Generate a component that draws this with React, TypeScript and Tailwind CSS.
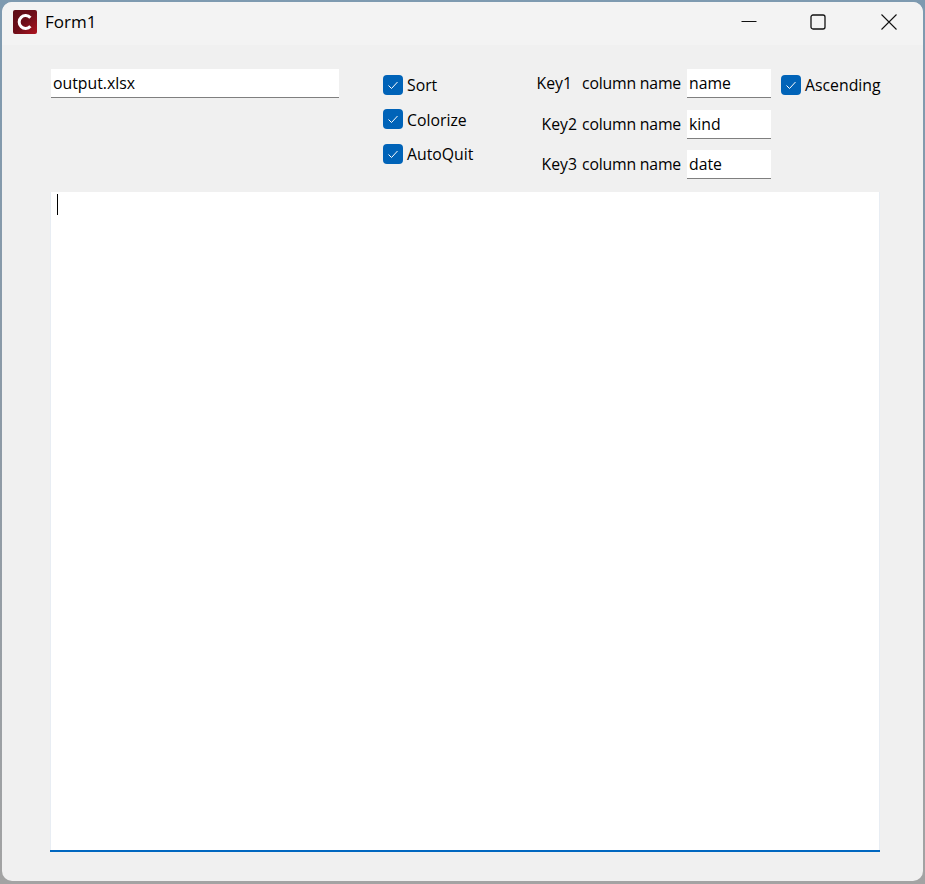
const FONT = "font-['Open_Sans',sans-serif]";

function Check({ label, className, labelClass }: { label: string; className?: string; labelClass?: string }) {
  return (
    <label className={`flex items-center h-5 ${className ?? ''}`}>
      <span className="flex items-center justify-center size-5 rounded-[4px] bg-[#0063b8] shrink-0">
        <svg width="12" height="12" viewBox="0 0 12 12" fill="none" stroke="#ffffff" strokeWidth="1">
          <path d="M1.5 6.5 L4.5 9.5 L10.5 3" />
        </svg>
      </span>
      <span className={`ml-1 text-[15.8px] leading-5 text-black whitespace-pre ${labelClass ?? ''}`}>{label}</span>
    </label>
  );
}

function Field({ value, className }: { value: string; className: string }) {
  return (
    <input
      readOnly
      value={value}
      className={`h-[29px] bg-white border-b border-[#7f7f7f] pl-[2px] text-[15.8px] text-black outline-none ${className}`}
    />
  );
}

function KeyRow({ name, gap, value, className }: { name: string; gap: string; value: string; className?: string }) {
  return (
    <div className={`flex items-center justify-end ${className ?? ''}`}>
      <span className="text-[15.8px] leading-5 mb-[2px]">{name}</span>
      <span className={`text-[15.8px] leading-5 mb-[2px] tracking-[-0.2px] ${gap}`}>column name</span>
      <Field value={value} className="w-[84px] ml-[6px]" />
    </div>
  );
}

export default function App() {
  return (
    <div className={`w-[925px] h-[884px] overflow-hidden bg-gradient-to-b from-[#7e9ab0] via-[#8d9aa6] to-[#a3a3a3] pl-[2px] pt-[2px] ${FONT}`}>
      <div className="w-[921px] h-[879px] rounded-[10px] overflow-hidden bg-[#f0f0f0] text-black">
        {/* title bar */}
        <div className="flex items-center h-[43px] pb-[3px] bg-[#f3f3f3]">
          <div className="flex items-center justify-center size-6 ml-[11px] rounded-[2px] bg-gradient-to-br from-[#5c0d16] via-[#6d0d18] to-[#b01420]">
            <svg width="18" height="18" viewBox="0 0 18 18" fill="none" stroke="#ffffff" strokeWidth="3">
              <path d="M14.4 4.8 A6.4 6.4 0 1 0 14.4 13.2" />
            </svg>
          </div>
          <span className="ml-2 text-[17px] leading-5">Form1</span>
          <div className="flex items-center ml-auto">
            <svg width="16" height="16" viewBox="0 0 16 16" className="mr-[53px]" stroke="#111" fill="none">
              <path d="M0.5 7.5 H15.5" />
            </svg>
            <svg width="16" height="16" viewBox="0 0 16 16" className="mr-[55px]" stroke="#111" strokeWidth="1.3" fill="none">
              <rect x="1" y="1" width="14" height="14" rx="2" />
            </svg>
            <svg width="16" height="16" viewBox="0 0 16 16" className="mr-[26px]" stroke="#111" strokeWidth="1.1" fill="none">
              <path d="M0.5 0.5 L15.5 15.5 M15.5 0.5 L0.5 15.5" />
            </svg>
          </div>
        </div>

        {/* body */}
        <div className="pl-[48px] pt-[24px]">
          <div className="flex h-[123px] pl-px">
            <Field value="output.xlsx" className="w-[288px]" />
            <div className="flex flex-col ml-[44px] pt-[6px] w-[130px]">
              <Check label="Sort" />
              <Check label="Colorize" className="mt-[14px]" labelClass="mt-[2px]" />
              <Check label="AutoQuit" className="mt-[15px]" />
            </div>
            <div className="flex flex-col w-[258px]">
              <KeyRow name="Key1" gap="ml-[10px]" value="name" />
              <KeyRow name="Key2" gap="ml-[5px]" value="kind" className="mt-3" />
              <KeyRow name="Key3" gap="ml-[5px]" value="date" className="mt-[11px]" />
            </div>
            <Check label="Ascending" className="ml-[10px] mt-[6px]" />
          </div>

          <div className="flex flex-col w-[830px] h-[660px] border-b-2 border-[#0067c0]">
            <div className="flex-1 bg-white border-x border-[#e8edf3] pl-[6px] pt-[2px]">
              <div className="w-px h-[21px] bg-black" />
            </div>
          </div>
        </div>
      </div>
    </div>
  );
}
